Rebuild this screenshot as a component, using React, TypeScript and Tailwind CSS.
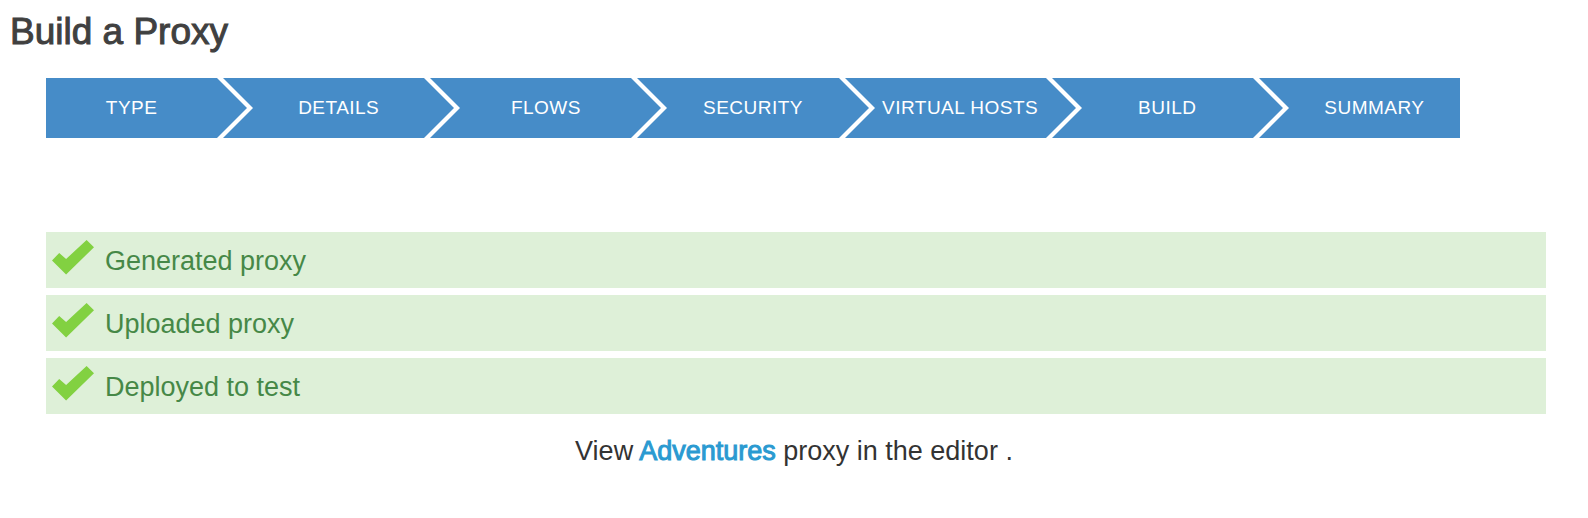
import { Fragment } from "react";

const steps = ["Type", "Details", "Flows", "Security", "Virtual Hosts", "Build", "Summary"];

const results = ["Generated proxy", "Uploaded proxy", "Deployed to test"];

function Chevron() {
  return (
    <svg className="block h-[60px] w-9" viewBox="0 0 36 60" aria-hidden="true">
      <path d="M0 0h6l30 30-30 30H0l30-30z" fill="#fff" />
    </svg>
  );
}

function CheckMark() {
  return (
    <svg className="h-[35px] w-[42px] shrink-0" viewBox="0 0 42 35" aria-hidden="true">
      <path d="M0 20.4L7.2 13l6.9 6L34.6 0 42 7.2 14.1 34.6z" fill="#82d141" />
    </svg>
  );
}

export default function App() {
  return (
    <main className="min-h-screen bg-white pb-12 font-['Liberation_Sans',Arial,sans-serif] text-[#333]">
      <h1 className="px-2.5 pt-3 text-[37px] leading-10 font-normal text-[#404040] [-webkit-text-stroke:1px]">
        Build a Proxy
      </h1>

      <ol className="mt-[26px] mr-32 ml-[46px] flex h-[60px] items-center bg-[#468cc8] text-[19px] tracking-wide text-white uppercase">
        {steps.map((step, i) => (
          <Fragment key={step}>
            {i > 0 && (
              <li aria-hidden="true">
                <Chevron />
              </li>
            )}
            <li className="flex-1 basis-0 text-center whitespace-nowrap">{step}</li>
          </Fragment>
        ))}
      </ol>

      <section className="mt-[94px] mr-[42px] ml-[46px] text-[27px]">
        <ul className="flex flex-col gap-[7px]">
          {results.map((result) => (
            <li key={result} className="flex h-14 items-start gap-[11px] bg-[#def0d8] px-1.5 pt-2 text-[#468847]">
              <CheckMark />
              <span className="leading-[42px]">{result}</span>
            </li>
          ))}
        </ul>
        <p className="mt-4 pr-1 text-center leading-[42px]">
          View{" "}
          <a href="#editor" className="text-[#2a9ad1] [-webkit-text-stroke:1px]">
            Adventures
          </a>{" "}
          proxy in the editor .
        </p>
      </section>
    </main>
  );
}
